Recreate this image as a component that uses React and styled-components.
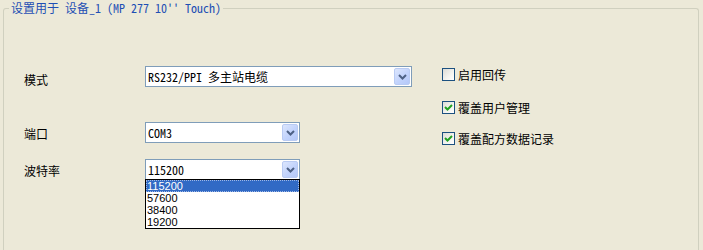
import React from 'react';
import styled, { createGlobalStyle } from 'styled-components';

const GlobalStyle = createGlobalStyle`
  html, body { margin: 0; padding: 0; }
  body {
    width: 703px;
    height: 250px;
    overflow: hidden;
    background: #ece9d8;
    font-family: "Noto Sans CJK SC", "Liberation Sans", sans-serif;
    font-size: 12px;
    color: #000;
  }
`;

const MONO = `"Noto Sans Mono CJK SC", "Noto Sans CJK SC", "DejaVu Sans Mono", monospace`;

const GroupBox = styled.fieldset`
  margin: 0 0 0 3px;
  padding: 0;
  width: 696px;
  height: 250px;
  box-sizing: border-box;
  border: 1px solid #d0d0bf;
  border-bottom: 0;
  border-radius: 3px 3px 0 0;
`;

const Title = styled.legend`
  margin-left: 5px;
  padding: 0 2px;
  font-family: ${MONO};
  font-size: 12px;
  line-height: 16px;
  color: #1e4fb4;
`;

const Body = styled.div`
  display: flex;
  align-items: flex-start;
  gap: 30px;
  padding: 50px 0 0 20px;
`;

const Form = styled.div`
  display: flex;
  flex-direction: column;
`;

const FieldRow = styled.div`
  display: flex;
  align-items: center;
  margin-top: ${p => p.$top || 0}px;
`;

const FieldLabel = styled.div`
  width: 121px;
  flex-shrink: 0;
  line-height: 16px;
  position: relative;
  top: ${p => p.$nudge || 0}px;
`;

const Combo = styled.div`
  position: relative;
  box-sizing: border-box;
  width: ${p => p.$width}px;
  height: 21px;
  border: 1px solid #7f9db9;
  background: #fff;
  display: flex;
  align-items: center;
`;

const ComboValue = styled.span`
  flex: 1;
  padding-left: 2px;
  font-family: ${MONO};
  font-size: 12px;
  line-height: 16px;
  white-space: nowrap;
`;

const ComboButton = styled.div`
  box-sizing: border-box;
  width: 16px;
  height: 17px;
  margin-right: 1px;
  border: 1px solid #b9cbf3;
  border-radius: 2px;
  background: linear-gradient(135deg, #dce6fd 0%, #c2d3fc 55%, #b4c8f8 100%);
  display: flex;
  align-items: center;
  justify-content: center;
`;

const DropList = styled.ul`
  position: absolute;
  left: -1px;
  top: 100%;
  width: ${p => p.$width}px;
  box-sizing: border-box;
  margin: 0;
  padding: 0;
  list-style: none;
  border: 1px solid #000;
  background: #fff;
  font-family: "Liberation Sans", Arial, sans-serif;
  font-size: 11px;
  z-index: 2;
`;

const DropItem = styled.li`
  box-sizing: border-box;
  height: 12px;
  line-height: 12px;
  padding-left: 1px;
  background: ${p => (p.$selected ? '#316ac5' : 'transparent')};
  color: ${p => (p.$selected ? '#fff' : '#000')};
  outline: ${p => (p.$selected ? '1px dotted #9fb8e6' : 'none')};
  outline-offset: -1px;
`;

const Options = styled.div`
  display: flex;
  flex-direction: column;
  padding-top: 2px;
`;

const Option = styled.label`
  display: flex;
  align-items: center;
  height: 13px;
  margin-top: ${p => p.$top || 0}px;
  line-height: 16px;
`;

const Box = styled.span`
  box-sizing: border-box;
  width: 13px;
  height: 13px;
  border: 1px solid #1c5180;
  background: linear-gradient(135deg, #dcdcd7 0%, #f4f4f0 60%, #ffffff 100%);
  display: flex;
  align-items: center;
  justify-content: center;
  margin-right: 3px;
  flex-shrink: 0;
`;

const Arrow = () => (
  <svg width="9" height="6" viewBox="0 0 9 6">
    <path d="M1 1 L4.5 4.5 L8 1" fill="none" stroke="#4d6185" strokeWidth="2" />
  </svg>
);

const Tick = () => (
  <svg width="9" height="9" viewBox="0 0 9 9">
    <path d="M1 4 L3.5 6.5 L8 2" fill="none" stroke="#21a121" strokeWidth="2" />
  </svg>
);

const Select = ({ value, width, children }) => (
  <Combo $width={width}>
    <ComboValue>{value}</ComboValue>
    <ComboButton><Arrow /></ComboButton>
    {children}
  </Combo>
);

const Check = ({ checked, label, top }) => (
  <Option $top={top}>
    <Box>{checked && <Tick />}</Box>
    {label}
  </Option>
);

const bauds = ['115200', '57600', '38400', '19200'];

const App = () => (
  <>
    <GlobalStyle />
    <GroupBox>
      <Title>设置用于 设备_1 (MP 277 10'' Touch)</Title>
      <Body>
        <Form>
          <FieldRow>
            <FieldLabel $nudge={3}>模式</FieldLabel>
            <Select value="RS232/PPI 多主站电缆" width={267} />
          </FieldRow>
          <FieldRow $top={35}>
            <FieldLabel $nudge={1}>端口</FieldLabel>
            <Select value="COM3" width={155} />
          </FieldRow>
          <FieldRow $top={16}>
            <FieldLabel $nudge={1}>波特率</FieldLabel>
            <Select value="115200" width={155}>
              <DropList $width={155}>
                {bauds.map((b, i) => (
                  <DropItem key={b} $selected={i === 0}>{b}</DropItem>
                ))}
              </DropList>
            </Select>
          </FieldRow>
        </Form>
        <Options>
          <Check label="启用回传" />
          <Check checked label="覆盖用户管理" top={20} />
          <Check checked label="覆盖配方数据记录" top={18} />
        </Options>
      </Body>
    </GroupBox>
  </>
);

export default App;
